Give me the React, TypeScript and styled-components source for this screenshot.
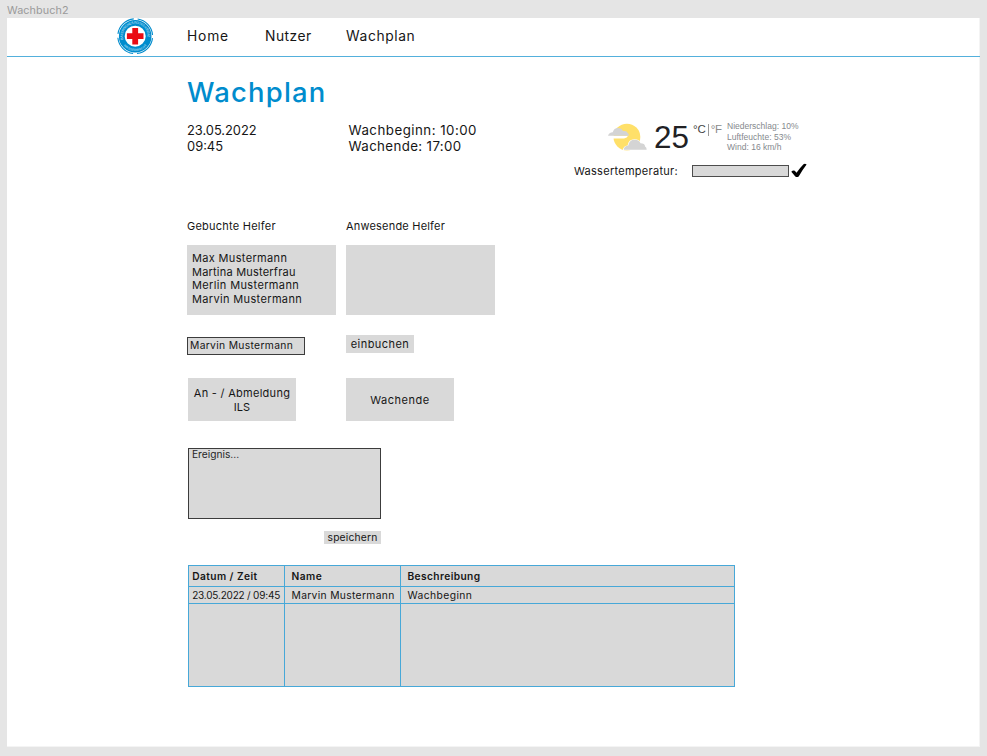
import React from "react";
import styled, { createGlobalStyle } from "styled-components";

const blue = "#008ccd";
const line = "#47a8d8";
const grey = "#d9d9d9";

const GlobalStyle = createGlobalStyle`
  *, *::before, *::after { box-sizing: border-box; }
  body { margin: 0; background: #e5e5e5; overflow: hidden; }
  button, input, textarea { border-radius: 0; margin: 0; padding: 0; }
`;

const Canvas = styled.div`
  height: 756px;
  padding: 0 7px;
  background: #e5e5e5;
  color: #161616;
  font-family: Inter, "Open Sans", sans-serif;
`;

const FrameName = styled.div`
  height: 18px;
  line-height: 21px;
  font-size: 10.8px;
  letter-spacing: 0.1px;
  color: #9a9a9a;
`;

const Frame = styled.div`
  width: 973px;
  height: 729px;
  background: #fff;
  border-right: 1px solid #f4f4f4;
  border-bottom: 1px solid #f4f4f4;
`;

const Text = styled.span<{ $size?: number; $track?: number; $line?: number; $weight?: number }>`
  display: block;
  white-space: nowrap;
  font-size: ${(p) => p.$size ?? 11}px;
  font-weight: ${(p) => p.$weight ?? 400};
  letter-spacing: ${(p) => p.$track ?? 0.5}px;
  line-height: ${(p) => p.$line ?? 16}px;
`;

const NavBar = styled.nav`
  display: grid;
  grid-template-columns: 70px 78px 81px 1fr;
  width: 973px;
  height: 39px;
  padding-left: 110px;
  border-bottom: 1px solid #53b0dc;
`;

const Title = styled.h1`
  margin: 0;
  font-size: 27.4px;
  font-weight: 450;
  line-height: 33px;
  letter-spacing: 1.22px;
  color: ${blue};
`;

const Main = styled.main`
  padding: 19px 0 0 180px;
`;

const InfoRow = styled.section`
  display: grid;
  grid-template-columns: 161.5px 225.5px 1fr;
  margin-top: 13px;
`;

const InfoText = styled.div<{ $top?: number }>`
  padding-top: ${(p) => p.$top ?? 0}px;
`;

const Weather = styled.div`
  display: flex;
  align-items: center;
  height: 30px;
  padding-left: 34px;
  font-family: "Liberation Sans", Arial, sans-serif;
`;

const Degrees = styled.span`
  width: 39px;
  margin-left: 6px;
  padding-top: 1px;
  font-size: 31.4px;
  line-height: 30px;
  color: #212124;
`;

const Units = styled.span`
  display: flex;
  align-self: flex-start;
  width: 34px;
  font-size: 11.5px;
  line-height: 14px;
  letter-spacing: -0.1px;
  color: #444;
`;

const Fahrenheit = styled.span`
  height: 12px;
  margin: 2px 0 0 2px;
  padding-left: 2px;
  border-left: 1px solid #999;
  line-height: 10px;
  letter-spacing: -0.4px;
  color: #8b8b8b;
`;

const Details = styled.div`
  font-size: 8.5px;
  line-height: 10.7px;
  letter-spacing: 0.01px;
  color: #85898e;
  white-space: nowrap;
`;

const WaterRow = styled.div`
  display: flex;
  align-items: center;
  height: 16px;
  margin-top: 11px;
`;

const WaterLabel = styled.label`
  width: 118px;
  font-size: 11px;
  letter-spacing: 0.28px;
`;

const WaterInput = styled.input`
  width: 97px;
  height: 12px;
  margin-right: 1.5px;
  border: 1px solid #4d4d4d;
  background: ${grey};
`;

const Columns = styled.div<{ $top: number }>`
  display: grid;
  grid-template-columns: 159px 1fr;
  align-items: start;
  margin-top: ${(p) => p.$top}px;
`;

const HelperBox = styled.div`
  width: 148.5px;
  height: 70px;
  padding: 7.2px 5px;
  background: ${grey};
`;

const NameInput = styled.input`
  width: 118px;
  height: 18px;
  margin-top: 2px;
  padding: 0 0 2px 2px;
  border: 1px solid #3c3c3c;
  background: ${grey};
  color: #161616;
  font: 400 10.3px Inter, sans-serif;
  letter-spacing: 0.33px;
`;

const SmallButton = styled.button<{ $w: number; $h: number; $size: number; $track: number }>`
  display: block;
  width: ${(p) => p.$w}px;
  height: ${(p) => p.$h}px;
  padding-bottom: 1px;
  border: 0;
  background: ${grey};
  color: #161616;
  font: 400 ${(p) => p.$size}px/${(p) => p.$h - 2}px Inter, sans-serif;
  letter-spacing: ${(p) => p.$track}px;
`;

const ActionButton = styled.button<{ $offset?: number }>`
  display: flex;
  flex-direction: column;
  align-items: center;
  justify-content: center;
  width: 108px;
  height: 43px;
  margin-left: ${(p) => p.$offset ?? 0}px;
  padding-top: 2px;
  border: 0;
  background: ${grey};
  color: #161616;
  font-family: Inter, sans-serif;
`;

const EventForm = styled.div`
  display: flex;
  flex-direction: column;
  align-items: flex-end;
  width: 193px;
  margin: 27px 0 0 1px;
`;

const EventField = styled.textarea`
  display: block;
  width: 193px;
  height: 71px;
  margin-bottom: 12px;
  padding: 0 3px;
  border: 1px solid #3c3c3c;
  background: ${grey};
  font: 400 10.2px/11px Inter, sans-serif;
  letter-spacing: 0;
  resize: none;
  &::placeholder { color: #262626; opacity: 1; }
`;

const Log = styled.div`
  display: grid;
  grid-template-columns: 96px 116px 1fr;
  grid-template-rows: 21px 17px 82px;
  width: 547px;
  margin: 21px 0 0 1px;
  border: 1px solid ${line};
  background: ${grey};
`;

const Cell = styled.div<{ $first?: boolean; $last?: boolean; $bottom?: boolean }>`
  padding-left: ${(p) => (p.$first ? 3.2 : 6.5)}px;
  border-right: ${(p) => (p.$last ? 0 : 1)}px solid ${line};
  border-bottom: ${(p) => (p.$bottom ? 0 : 1)}px solid ${line};
`;

const Logo = () => (
  <svg width="37" height="37" viewBox="-18.2 -18.2 37 37">
    <defs>
      <path id="upper" d="M-11.9 3.5A12.4 12.4 0 1 1 11.9 3.5" />
      <path id="lower" d="M-12.5 8A14.8 14.8 0 0 0 12.5 8" />
    </defs>
    <circle r="17.4" fill="none" stroke={blue} strokeWidth="1.1" strokeDasharray="23.3 4.03" strokeDashoffset="-2" />
    <circle r="13.4" fill="none" stroke={blue} strokeWidth="5.8" />
    <g fill="#8fcdeb" fontFamily="Liberation Sans, sans-serif" fontWeight="700">
      <text fontSize="3.5"><textPath href="#upper" textLength="43">BAYERISCHES ROTES KREUZ</textPath></text>
      <text fontSize="3.3"><textPath href="#lower" startOffset="50%" textAnchor="middle">WASSERWACHT</textPath></text>
    </g>
    <path d="M-2.9-8.2h5.8v5.3h5.4v5.8H2.9v5.3h-5.8V2.9h-5.4v-5.8h5.4z" fill="#ea0b13" />
  </svg>
);

const WeatherIcon = () => (
  <svg width="40" height="30" viewBox="0 0 40 30">
    <circle cx="18.9" cy="15.1" r="13.4" fill="#ffe069" />
    <path d="M-.5 13.7V16.500H16q3.400-.5 4-2.800z" fill="#fff" />
    <path d="M0 13.700q1-3 4.700-3.400Q6 5.800 10.400 6q3.400.2 4.600 3 3.800-.6 4.700 2.100 1.300.8 1.100 2.600z" fill="#d4d4d4" />
    <path d="M14.800 28.300q.3-4.300 4.800-4.800 1-6.600 7.200-6.300 4.700.2 6 3.800 4.500 0 4.900 3.400 1.800 1 1.800 3.900z" fill="#fff" />
    <path d="M15.800 27.800q.3-3.800 4.500-4.300 1-6.100 6.700-5.800 4.200.2 5.500 3.500 4.300 0 4.600 3.200 1.600 1 1.600 3.400z" fill="#d4d4d4" />
  </svg>
);

const CheckIcon = () => (
  <svg width="16" height="16" viewBox="0 0 16 16">
    <path d="M.3 8.700q1.600-1.900 3.500-1l1.700 2.100Q8.700 5 12.500 1.200q1.600-.900 3.100.4Q11.200 7.400 7.700 13.400q-2 1.400-3.600-.2z" fill="#000" />
  </svg>
);

const helpers: [string, number][] = [
  ["Max Mustermann", 0.34],
  ["Martina Musterfrau", 0.21],
  ["Merlin Mustermann", 0.37],
  ["Marvin Mustermann", 0.35],
];

export default function App() {
  return (
    <Canvas>
      <GlobalStyle />
      <FrameName>Wachbuch2</FrameName>
      <Frame>
        <NavBar>
          <Logo />
          <Text $size={13.8} $track={0.8} $line={36}>Home</Text>
          <Text $size={13.8} $track={0.5} $line={36}>Nutzer</Text>
          <Text $size={13.8} $track={0.62} $line={36}>Wachplan</Text>
        </NavBar>
        <Main>
          <Title>Wachplan</Title>
          <InfoRow>
            <InfoText $top={1}>
              <Text $size={12.9} $track={-0.04}>23.05.2022</Text>
              <Text $size={12.9} $track={0}>09:45</Text>
            </InfoText>
            <InfoText>
              <Text $size={13.3} $track={0.48}>Wachbeginn: 10:00</Text>
              <Text $size={13.3} $track={0.37}>Wachende: 17:00</Text>
            </InfoText>
            <div>
              <Weather>
                <WeatherIcon />
                <Degrees>25</Degrees>
                <Units>°C<Fahrenheit>°F</Fahrenheit></Units>
                <Details>
                  <div>Niederschlag: 10%</div>
                  <div>Luftfeuchte: 53%</div>
                  <div>Wind: 16 km/h</div>
                </Details>
              </Weather>
              <WaterRow>
                <WaterLabel htmlFor="water">Wassertemperatur:</WaterLabel>
                <WaterInput id="water" />
                <CheckIcon />
              </WaterRow>
            </div>
          </InfoRow>

          <Columns $top={39}>
            <Text $track={0.24} $line={17}>Gebuchte Helfer</Text>
            <Text $track={0.2} $line={17}>Anwesende Helfer</Text>
          </Columns>
          <Columns $top={10}>
            <HelperBox>
              {helpers.map(([name, track]) => (
                <Text key={name} $track={track} $line={13.6}>{name}</Text>
              ))}
            </HelperBox>
            <HelperBox />
          </Columns>

          <Columns $top={20}>
            <NameInput defaultValue="Marvin Mustermann" />
            <SmallButton $w={68} $h={18} $size={11} $track={0.45}>einbuchen</SmallButton>
          </Columns>

          <Columns $top={23}>
            <ActionButton $offset={1}>
              <Text $track={0.28} $line={13.6}>An - / Abmeldung</Text>
              <Text $track={0.1} $line={13.6}>ILS</Text>
            </ActionButton>
            <ActionButton>
              <Text $track={0.52} $line={13.6}>Wachende</Text>
            </ActionButton>
          </Columns>

          <EventForm>
            <EventField placeholder="Ereignis..." />
            <SmallButton $w={57} $h={13} $size={10.3} $track={0.18}>speichern</SmallButton>
          </EventForm>

          <Log>
            <Cell $first><Text $size={10.2} $weight={600} $track={0.44} $line={21}>Datum / Zeit</Text></Cell>
            <Cell><Text $size={10.2} $weight={600} $track={0.5} $line={20}>Name</Text></Cell>
            <Cell $last><Text $size={10.2} $weight={600} $track={0.4} $line={21}>Beschreibung</Text></Cell>
            <Cell $first><Text $size={10} $track={-0.2} $line={17}>23.05.2022 / 09:45</Text></Cell>
            <Cell><Text $size={10.3} $track={0.33} $line={17}>Marvin Mustermann</Text></Cell>
            <Cell $last><Text $size={10.3} $track={0.42} $line={17}>Wachbeginn</Text></Cell>
            <Cell $first $bottom />
            <Cell $bottom />
            <Cell $last $bottom />
          </Log>
        </Main>
      </Frame>
    </Canvas>
  );
}
